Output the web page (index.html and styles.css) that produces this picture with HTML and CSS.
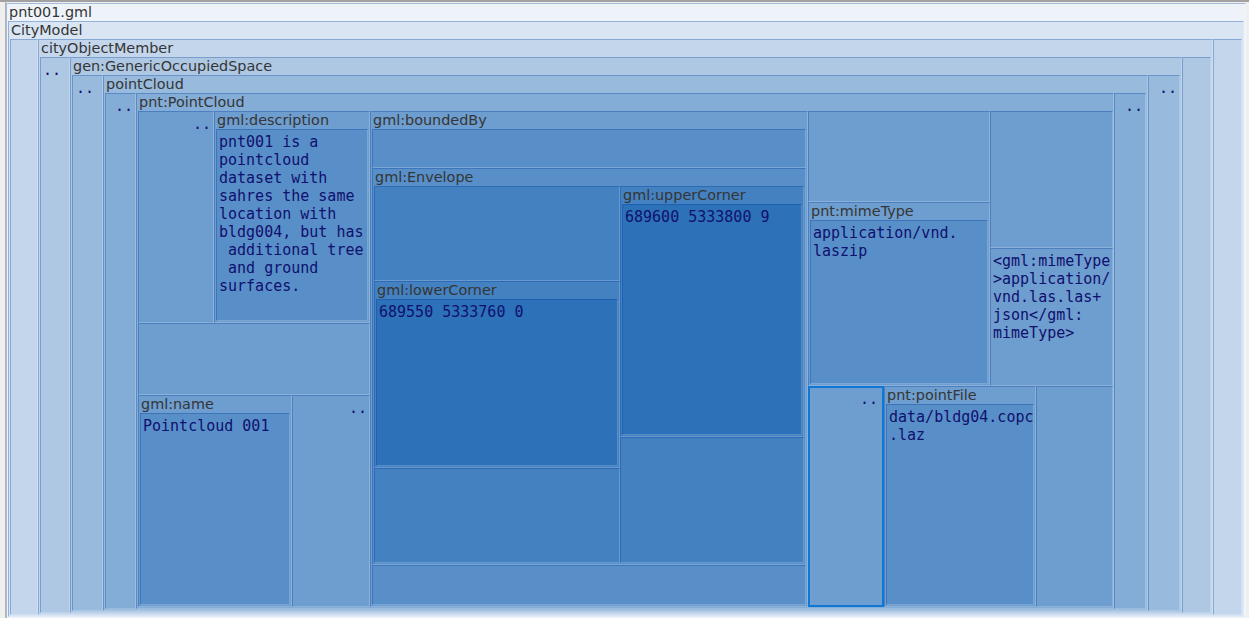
FILE: index.html
```html
<!DOCTYPE html>
<html lang="en">
<head>
<meta charset="utf-8">
<title>pnt001.gml – map view</title>
<link rel="stylesheet" href="styles.css">
</head>
<body>
<div class="view">
 <div class="n l0 doc">
  <div class="lab">pnt001.gml</div>
  <div class="kids">
   <div class="n l1" style="width:1236px">
    <div class="lab">CityModel</div>
    <div class="kids">
     <div class="n l2" style="width:28px"></div>
     <div class="n l2" style="width:1175px">
      <div class="lab">cityObjectMember</div>
      <div class="kids">
       <div class="n l3" style="width:30px"><div class="dots far">..</div></div>
       <div class="n l3" style="width:1112px">
        <div class="lab">gen:GenericOccupiedSpace</div>
        <div class="kids">
         <div class="n l4" style="width:31px"><div class="dots far">..</div></div>
         <div class="n l4" style="width:1045px">
          <div class="lab">pointCloud</div>
          <div class="kids">
           <div class="n l5" style="width:31px"><div class="dots">..</div></div>
           <div class="n l5" style="width:978px">
            <div class="lab">pnt:PointCloud</div>
            <div class="kids">
             <div class="col" style="width:232px">
              <div class="row" style="height:212px">
               <div class="n l6" style="width:76px"><div class="dots">..</div></div>
               <div class="n l6 fill">
                <div class="lab">gml:description</div>
                <div class="kids">
                 <div class="n l7 val fill">pnt001 is a
pointcloud
dataset with
sahres the same
location with
bldg004, but has
 additional tree
 and ground
surfaces.</div>
                </div>
               </div>
              </div>
              <div class="n l6" style="height:72px"></div>
              <div class="row fill">
               <div class="n l6" style="width:154px">
                <div class="lab">gml:name</div>
                <div class="kids">
                 <div class="n l7 val fill">Pointcloud 001</div>
                </div>
               </div>
               <div class="n l6 fill"><div class="dots">..</div></div>
              </div>
             </div>
             <div class="n l6" style="width:438px">
              <div class="lab">gml:boundedBy</div>
              <div class="kids v">
               <div class="n l7" style="height:39px"></div>
               <div class="n l7" style="height:397px">
                <div class="lab">gml:Envelope</div>
                <div class="kids">
                 <div class="col" style="width:246px">
                  <div class="n l8" style="height:95px"></div>
                  <div class="n l8" style="height:187px">
                   <div class="lab">gml:lowerCorner</div>
                   <div class="kids">
                    <div class="n l9 val fill">689550 5333760 0</div>
                   </div>
                  </div>
                  <div class="n l8 fill"></div>
                 </div>
                 <div class="col fill">
                  <div class="n l8" style="height:251px">
                   <div class="lab">gml:upperCorner</div>
                   <div class="kids">
                    <div class="n l9 val fill">689600 5333800 9</div>
                   </div>
                  </div>
                  <div class="n l8 fill"></div>
                 </div>
                </div>
               </div>
               <div class="n l7 fill"></div>
              </div>
             </div>
             <div class="col fill">
              <div class="row" style="height:275px">
               <div class="col" style="width:182px">
                <div class="n l6" style="height:91px"></div>
                <div class="n l6 fill">
                 <div class="lab">pnt:mimeType</div>
                 <div class="kids">
                  <div class="n l7 val fill">application/vnd.
laszip</div>
                 </div>
                </div>
               </div>
               <div class="col fill">
                <div class="n l6" style="height:137px"></div>
                <div class="n l6 val fill">&lt;gml:mimeType
&gt;application/
vnd.las.las+
json&lt;/gml:
mimeType&gt;</div>
               </div>
              </div>
              <div class="row fill">
               <div class="n l6 sel" style="width:76px"><div class="dots">..</div></div>
               <div class="n l6" style="width:152px">
                <div class="lab">pnt:pointFile</div>
                <div class="kids">
                 <div class="n l7 val fill">data/bldg04.copc
.laz</div>
                </div>
               </div>
               <div class="n l6 fill"></div>
              </div>
             </div>
            </div>
           </div>
           <div class="n l5" style="width:32px"><div class="dots">..</div></div>
          </div>
         </div>
         <div class="n l4" style="width:32px"><div class="dots">..</div></div>
        </div>
       </div>
       <div class="n l3" style="width:29px"></div>
      </div>
     </div>
     <div class="n l2" style="width:29px"></div>
    </div>
   </div>
  </div>
 </div>
</div>
</body>
</html>
```

FILE: styles.css
```css
html, body {
  margin: 0;
  padding: 0;
}
body {
  width: 1249px;
  height: 618px;
  overflow: hidden;
  background: #efefef;
  border-top: 2px solid #a2a2a2;
  box-sizing: border-box;
}
.view {
  margin-left: 5px;
  border-left: 1px solid #b4b4b4;
  width: 1241px;
  height: 616px;
  padding-top: 1px;
  box-sizing: border-box;
}
.n {
  box-sizing: border-box;
  display: flex;
  flex-direction: column;
  flex: none;
  min-width: 0;
  min-height: 0;
  overflow: hidden;
  border-top: 1px solid rgba(0, 60, 160, 0.3);
  border-left: 1px solid rgba(0, 60, 160, 0.3);
  border-right: 1px solid rgba(255, 255, 255, 0.2);
  border-bottom: 1px solid rgba(255, 255, 255, 0.2);
}
.doc {
  width: 1240px;
  height: 616px;
}
.lab {
  flex: none;
  height: 17px;
  line-height: 17px;
  padding-left: 2px;
  font-family: "DejaVu Sans", sans-serif;
  font-size: 14.4px;
  color: #353535;
  white-space: nowrap;
}
.kids {
  flex: 1 1 0;
  min-height: 0;
  display: flex;
  padding: 0 1px 1px 1px;
}
.kids.v {
  flex-direction: column;
}
.col {
  display: flex;
  flex-direction: column;
  flex: none;
  min-height: 0;
}
.row {
  display: flex;
  flex: none;
  min-width: 0;
}
.fill {
  flex: 1 1 0;
}
.val, .dots {
  font-family: "DejaVu Sans Mono", monospace;
  font-size: 15px;
  line-height: 18px;
  color: #10106e;
  white-space: pre;
}
.val {
  padding: 3px 2px 0 2px;
}
.dots {
  padding: 3px 2px 0 2px;
  text-align: right;
}
.dots.far {
  padding-right: 8px;
}
.sel {
  border: 2px solid #0f78d6;
}
.sel .dots {
  padding-right: 4px;
  padding-top: 2px;
}
.l0 { background: #eef3fa; }
.l1 { background: #d9e5f3; }
.l2 { background: #c3d6ec; }
.l3 { background: #aec8e4; }
.l4 { background: #98badd; }
.l5 { background: #83acd6; }
.l6 { background: #6e9dcf; }
.l7 { background: #588fc8; }
.l8 { background: #4381c0; }
.l9 { background: #2d72b9; }
```
